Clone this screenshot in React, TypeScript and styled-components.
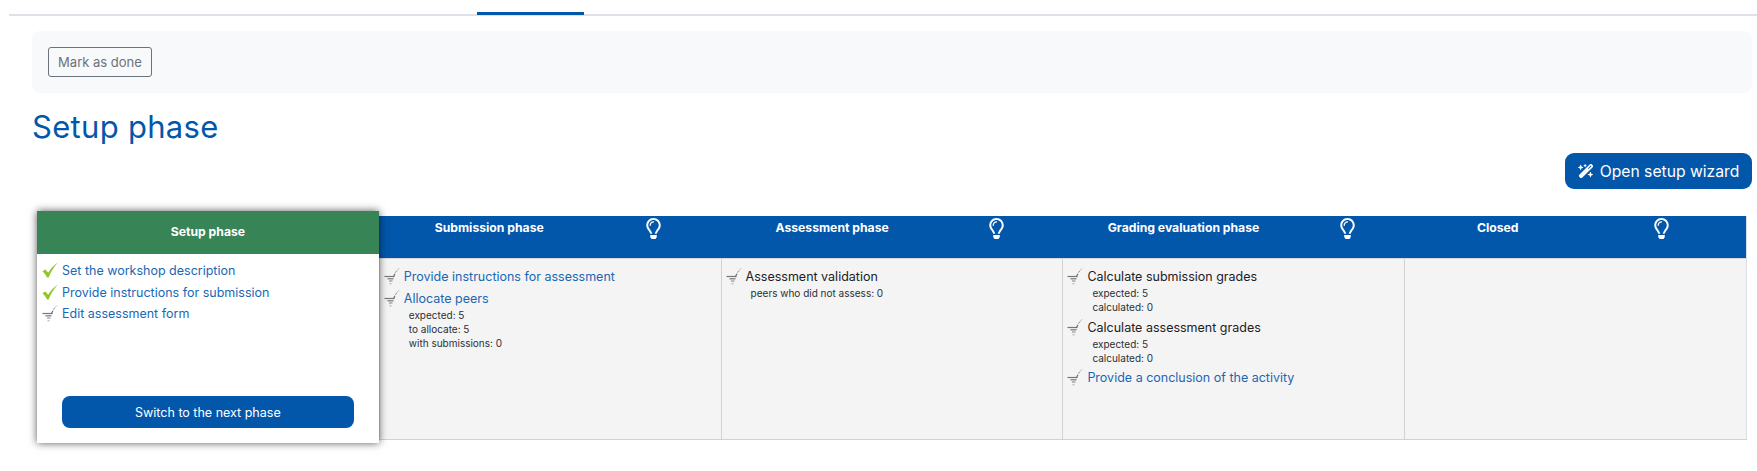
import styled, { createGlobalStyle } from "styled-components"
import { FaRegLightbulb } from "react-icons/fa"
import { FaWandMagicSparkles } from "react-icons/fa6"

const GlobalStyle = createGlobalStyle`
  html, body {
    margin: 0;
    background: #fff;
    color: #1d2125;
    font-family: "Inter", "Liberation Sans", sans-serif;
  }
`

const Page = styled.div`
  width: 1757px;
  height: 471px;
  overflow: hidden;
`

const Tabs = styled.div`
  height: 16px;
  margin-left: 9px;
  padding-left: 468px;
  border-bottom: 2px solid #e0e0e8;
  box-sizing: border-box;
`

const ActiveTab = styled.div`
  width: 107px;
  height: 15px;
  box-sizing: border-box;
  border-bottom: 3px solid #0357ab;
`

const Content = styled.div`
  display: flex;
  flex-direction: column;
  width: 1720px;
  margin-left: 32px;
`

const ActionBar = styled.div`
  display: flex;
  align-items: flex-start;
  height: 62px;
  margin-top: 15px;
  padding: 16px;
  box-sizing: border-box;
  background: #f8f9fa;
  border-radius: 8px;
`

const DoneButton = styled.button`
  height: 30px;
  width: 104px;
  padding: 0;
  background: transparent;
  border: 1px solid #6a737b;
  border-radius: 3px;
  color: #6a737b;
  font-family: inherit;
  font-size: 13px;
`

const Title = styled.h2`
  margin: 15px 0 0;
  color: #0357ab;
  font-size: 31px;
  font-weight: 400;
  line-height: 38px;
  letter-spacing: 0.3px;
`

const WizardRow = styled.div`
  display: flex;
  justify-content: flex-end;
  margin-top: 7px;
`

const WizardButton = styled.button`
  display: flex;
  align-items: center;
  justify-content: center;
  gap: 6px;
  width: 187px;
  height: 36px;
  padding: 0;
  background: #0357ab;
  border: 0;
  border-radius: 9px;
  color: #fff;
  font-family: inherit;
  font-size: 15.7px;
`

const Board = styled.div`
  display: grid;
  grid-template-columns: repeat(5, 1fr);
  width: 1709px;
  margin: 27px 0 0 5px;
  border-bottom: 1px solid #cfd2d6;
  border-right: 1px solid #dcdfe2;
`

const Column = styled.div<{ $active?: boolean }>`
  display: flex;
  flex-direction: column;
  height: 223px;
  background: ${(p) => (p.$active ? "#fff" : "#f4f4f4")};
  ${(p) =>
    p.$active &&
    `
    position: relative;
    z-index: 1;
    height: 232px;
    margin: -5px 0 -4px;
    box-shadow: 0 0 8px rgba(0, 0, 0, 0.65);
  `}
`

const ColumnHead = styled.div<{ $active?: boolean }>`
  display: flex;
  align-items: flex-start;
  justify-content: ${(p) => (p.$active ? "center" : "space-around")};
  flex: none;
  height: ${(p) => (p.$active ? "43px" : "42px")};
  box-sizing: border-box;
  padding: ${(p) => (p.$active ? "13px 0 0" : "4px 9px 0 5px")};
  background: ${(p) => (p.$active ? "#378457" : "#0357ab")};
  color: #fff;
  font-size: 12.2px;
  font-weight: 700;
  line-height: 16px;
`

const Bulb = styled(FaRegLightbulb)`
  flex: none;
  width: 15px;
  height: 21px;
  margin-top: -2px;
`

const ColumnBody = styled.div<{ $first?: boolean }>`
  display: flex;
  flex-direction: column;
  flex: 1;
  padding: ${(p) => (p.$first ? "8px 4px 0 5px" : "9px 4px 0")};
  border-left: ${(p) => (p.$first ? "0" : "1px solid #cfd2d6")};
  border-top: ${(p) => (p.$first ? "0" : "1px solid #d8d8d8")};
  box-sizing: border-box;
`

const Tasks = styled.ul`
  margin: 0;
  padding: 0;
  list-style: none;
  flex: 1;
`

const Task = styled.li`
  display: grid;
  grid-template-columns: 16px 1fr;
  column-gap: 4px;
  margin-bottom: 3.5px;
`

const TaskIcon = styled.svg`
  width: 16px;
  height: 17px;
`

const TaskLabel = styled.span<{ $link?: boolean }>`
  color: ${(p) => (p.$link ? "#1a67b5" : "#1d2125")};
  font-size: 12.5px;
  line-height: 18px;
`

const Details = styled.div`
  grid-column: 2;
  padding: 0 0 1px 5px;
  color: #2b2f36;
  font-size: 10px;
  line-height: 14px;
`

const NextButton = styled.button`
  align-self: center;
  width: 292px;
  height: 32px;
  margin: 0 0 15px -1px;
  padding: 0;
  background: #0357ab;
  border: 0;
  border-radius: 8px;
  color: #fff;
  font-family: inherit;
  font-size: 12.5px;
`

const DoneMark = () => (
  <TaskIcon viewBox="0 0 16 17">
    <path d="M0.4 9.2 L3.4 7.6 L6.2 10.8 C8.2 7.2 11.2 3.4 15.8 0.4 C11.8 5 9 9.4 6.6 15.4 L5 15.4 C3.8 12.8 2.2 10.8 0.4 9.2 Z" fill="#92c528" />
  </TaskIcon>
)

const TodoMark = () => (
  <TaskIcon viewBox="0 0 16 17">
    <g fill="none">
      <path d="M0.5 8.5 L10.5 8.5" stroke="#77777b" strokeWidth="1.2" />
      <path d="M3.5 10.8 L9.5 10.8" stroke="#77777b" strokeWidth="1.2" />
      <path d="M5 13 L8.5 13" stroke="#8c8c90" strokeWidth="1.1" />
      <path d="M5.5 15.8 L7.5 15.8" stroke="#a5a5a8" strokeWidth="1" />
      <path d="M9.2 9 L11 5.8" stroke="#6f6f73" strokeWidth="1.2" />
      <path d="M11.4 4.6 L13 2.6" stroke="#858589" strokeWidth="1" />
      <path d="M13.6 1.8 L15 0.4" stroke="#a5a5a8" strokeWidth="0.9" />
    </g>
  </TaskIcon>
)

type Item = { label: string; link?: boolean; done?: boolean; details?: string[] }

const phases: { name: string; items: Item[]; active?: boolean }[] = [
  {
    name: "Setup phase",
    active: true,
    items: [
      { label: "Set the workshop description", link: true, done: true },
      { label: "Provide instructions for submission", link: true, done: true },
      { label: "Edit assessment form", link: true },
    ],
  },
  {
    name: "Submission phase",
    items: [
      { label: "Provide instructions for assessment", link: true },
      { label: "Allocate peers", link: true, details: ["expected: 5", "to allocate: 5", "with submissions: 0"] },
    ],
  },
  {
    name: "Assessment phase",
    items: [{ label: "Assessment validation", details: ["peers who did not assess: 0"] }],
  },
  {
    name: "Grading evaluation phase",
    items: [
      { label: "Calculate submission grades", details: ["expected: 5", "calculated: 0"] },
      { label: "Calculate assessment grades", details: ["expected: 5", "calculated: 0"] },
      { label: "Provide a conclusion of the activity", link: true },
    ],
  },
  { name: "Closed", items: [] },
]

const App = () => {
  return (
    <Page>
      <GlobalStyle />
      <Tabs>
        <ActiveTab />
      </Tabs>
      <Content>
        <ActionBar>
          <DoneButton>Mark as done</DoneButton>
        </ActionBar>
        <Title>Setup phase</Title>
        <WizardRow>
          <WizardButton>
            <FaWandMagicSparkles size={16} />
            Open setup wizard
          </WizardButton>
        </WizardRow>
        <Board>
          {phases.map((phase, i) => (
            <Column key={phase.name} $active={phase.active}>
              <ColumnHead $active={phase.active}>
                <span>{phase.name}</span>
                {!phase.active && <Bulb />}
              </ColumnHead>
              <ColumnBody $first={i === 0}>
                <Tasks>
                  {phase.items.map((item) => (
                    <Task key={item.label}>
                      {item.done ? <DoneMark /> : <TodoMark />}
                      <TaskLabel $link={item.link}>{item.label}</TaskLabel>
                      {item.details && (
                        <Details>
                          {item.details.map((d) => (
                            <div key={d}>{d}</div>
                          ))}
                        </Details>
                      )}
                    </Task>
                  ))}
                </Tasks>
                {phase.active && <NextButton>Switch to the next phase</NextButton>}
              </ColumnBody>
            </Column>
          ))}
        </Board>
      </Content>
    </Page>
  )
}

export default App
